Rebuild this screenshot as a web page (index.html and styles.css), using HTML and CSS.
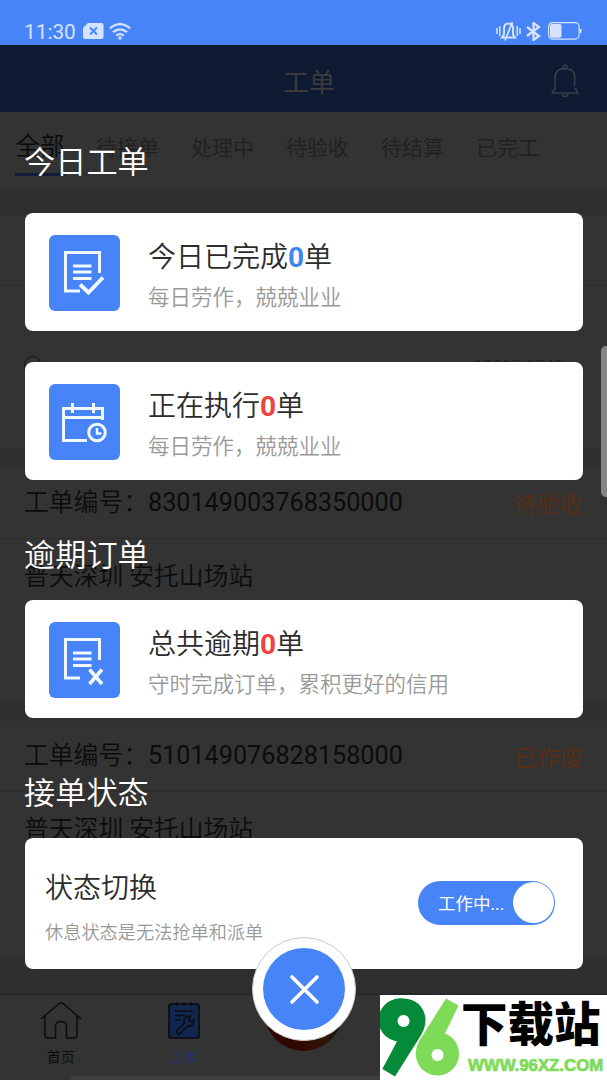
FILE: index.html
```html
<!DOCTYPE html>
<html lang="zh-CN">
<head>
    <meta charset="UTF-8">
    <title>工单</title>
    <link rel="stylesheet" href="styles.css">
</head>
<body>
    <div class="phone">
        <div class="status-bar">
            <span class="time">11:30</span>
            <svg class="sim" width="21" height="16" viewBox="0 0 21 16"><path d="M5 0h13.500q2 0 2 2v12q0 2-2 2h-16.500q-2 0-2-2V5z" fill="#d5e3fe"/><path d="M7 4.500l7 7M14 4.500l-7 7" stroke="#4684f8" stroke-width="1.800"/></svg>
            <svg class="wifi" width="22" height="17" viewBox="0 0 22 17"><g fill="none" stroke="#d5e3fe" stroke-width="2.200"><path d="M.8 5.500q10.200-8.600 20.400 0"/><path d="M4 9.200q7-5.800 14 0"/><path d="M7.200 12.600q3.800-3 7.600 0"/></g><circle cx="11" cy="15" r="1.800" fill="#d5e3fe"/></svg>
            <span class="spacer"></span>
            <svg class="mute" width="25" height="20" viewBox="0 0 25 20"><g fill="none" stroke="#d5e3fe" stroke-width="1.500"><path d="M1 7v6M3.800 5v10M21.200 5v10M24 7v6"/><path d="M6 16.500h13l-2-3V7.500q0-5-4.500-5T8 7.500v6z" stroke-width="2"/><path d="M16.500 1L9 19.500" stroke-width="1.800"/></g></svg>
            <svg class="bluetooth" width="15" height="19" viewBox="0 0 15 19"><path d="M1 5l12 9-5.500 4V1L13 5 1 14" fill="none" stroke="#d5e3fe" stroke-width="2.300"/></svg>
            <svg class="battery" width="34" height="18" viewBox="0 0 34 18"><rect x=".6" y=".6" width="30.500" height="16.500" rx="4" fill="none" stroke="#d5e3fe" stroke-width="1.200"/><rect x="2" y="2" width="11.500" height="13.700" rx="2" fill="#d5e3fe"/><path d="M32.500 7v4" stroke="#d5e3fe" stroke-width="2"/></svg>
        </div>

        <div class="header">
            <span></span>
            <h1>工单</h1>
            <svg class="bell" width="28" height="34" viewBox="0 0 28 34"><g fill="none" stroke="#3a3f4a" stroke-width="1.400"><circle cx="14" cy="3" r="2"/><path d="M4 26.500V14.500q0-10 10-10t10 10c0 3 0 5-.8 7.500M24 23.500l2.800 5.500H1l3-5"/><path d="M11 29.500q0 3 3 3t3-3"/></g></svg>
        </div>

        <div class="tabs">
            <div class="tab active">全部</div>
            <div class="tab">待接单</div>
            <div class="tab">处理中</div>
            <div class="tab">待验收</div>
            <div class="tab">待结算</div>
            <div class="tab">已完工</div>
        </div>

        <div class="orders">
            <div class="order">
                <div class="order-head"></div>
                <div class="order-body">
                    <div class="order-meta"><span class="dot"></span><span class="meta-no">18317 0740</span></div>
                </div>
            </div>
            <div class="order">
                <div class="order-head"><span>工单编号：<span class="order-no">830149003768350000</span></span><span class="order-state">待验收</span></div>
                <div class="order-body">普天深圳 安托山场站</div>
            </div>
            <div class="order">
                <div class="order-head"><span>工单编号：<span class="order-no">510149076828158000</span></span><span class="order-state">已作废</span></div>
                <div class="order-body">普天深圳 安托山场站</div>
            </div>
        </div>

        <div class="nav">
            <div class="nav-item">
                <svg width="42" height="38" viewBox="0 0 42 38"><path d="M1 18L19 2.500q2-1.500 4 0L41 18M5 15v19q0 3 3 3h7.500V25.500q0-5 5.500-5t5.500 5V37H34q3 0 3-3V15" fill="none" stroke="#0c0c0c" stroke-width="1.500"/></svg>
                <span>首页</span>
            </div>
            <div class="nav-item current">
                <svg width="32" height="38" viewBox="0 0 32 38"><rect x="1" y="3" width="30" height="34" rx="2.500" fill="#10264c" stroke="#080b10" stroke-width="1.600"/><path d="M9 1v4M16 1v4M23 1v4M7 10h18M7 14.500h10M7 19h6" stroke="#080b10" stroke-width="1.300"/><path d="M8.500 30l8-8q-1.500-5.500 3.500-6.500l2.500-.3-2 3.500 2 2 3.500-2q0 6.500-6.500 6.500l-8 8q-2 .5-3-3.200z" fill="none" stroke="#080b10" stroke-width="1.400"/></svg>
                <span>工单</span>
            </div>
            <div class="nav-item nav-center"><i></i></div>
            <div class="nav-item"></div>
            <div class="nav-item"></div>
        </div>
        <div class="bottom-strip"></div>

        <div class="overlay">
            <h2>今日工单</h2>
            <div class="card">
                <svg class="tile" width="71" height="76" viewBox="0 0 71 76"><g fill="none" stroke="#f2f8ff" stroke-width="3"><path d="M50.500 38V17.500h-34V56H31M24 31h18.500M24 37h18.500M24 43.500h18.500"/><path d="M31 49.500l8.500 8L54 42.500" stroke-width="3.800"/></g></svg>
                <div class="card-text">
                    <h3>今日已完成<b class="blue">0</b>单</h3>
                    <p>每日劳作，兢兢业业</p>
                </div>
            </div>
            <div class="card">
                <svg class="tile" width="71" height="76" viewBox="0 0 71 76"><g fill="none" stroke="#f2f8ff" stroke-width="3"><path d="M38 56.500H14.500v-32h39V36M14.500 33.500h39M23.500 19v10M44.500 19v10"/><circle cx="48" cy="48.500" r="8.300"/><path d="M48 44v5.500h4.500" stroke-width="2.400"/></g></svg>
                <div class="card-text">
                    <h3>正在执行<b class="red">0</b>单</h3>
                    <p>每日劳作，兢兢业业</p>
                </div>
            </div>

            <h2>逾期订单</h2>
            <div class="card">
                <svg class="tile" width="71" height="76" viewBox="0 0 71 76"><g fill="none" stroke="#f2f8ff" stroke-width="3"><path d="M50.500 38V17.500h-34V56H31M24 31h18.500M24 37h18.500M24 43.500h18.500"/><path d="M40.500 47.500L53 62M53 47.500L40.500 62" stroke-width="3.600"/></g></svg>
                <div class="card-text">
                    <h3>总共逾期<b class="red">0</b>单</h3>
                    <p>守时完成订单，累积更好的信用</p>
                </div>
            </div>

            <h2>接单状态</h2>
            <div class="card switch-card">
                <div class="switch-text">
                    <h3>状态切换</h3>
                    <p>休息状态是无法抢单和派单</p>
                </div>
                <div class="switch"><span>工作中...</span><i class="knob"></i></div>
            </div>
        </div>

        <div class="close-btn">
            <svg width="82" height="82" viewBox="0 0 82 82"><circle cx="41" cy="41" r="41" fill="#4684f8"/><path d="M29 29l25 25M54 29L29 54" stroke="#fff" stroke-width="3.600" stroke-linecap="round"/></svg>
        </div>

        <div class="scroll-thumb"></div>

        <div class="watermark">
            <svg width="80" height="85" viewBox="0 0 80 85">
                <path fill="#058a3a" fill-rule="evenodd" d="M23.500 3.500C36 3.500 45.500 13 45.500 25q0 8-5 16L15 81.500 2.300 74 17 46.500A21.500 21.500 0 0 1 23.500 3.500zM23.500 20a6 6 0 1 0 .1 0z"/>
                <path fill="#7ddb57" fill-rule="evenodd" d="M66 3.500L78.500 10.500 65 38.500A21.700 21.700 0 1 1 36.500 53q.5-3 3-7.500zM57.500 54a6 6 0 1 0 .1 0z"/>
            </svg>
            <div class="mark-text">
                <strong>下载站</strong>
                <span>WWW.96XZ.COM</span>
            </div>
        </div>
    </div>
</body>
</html>
```
FILE: styles.css
```css
* {
    box-sizing: border-box;
}
body {
    margin: 0;
    background: #333;
    font-family: Roboto, "Noto Sans CJK SC", sans-serif;
    color: #2c2c2c;
}
h1, h2, h3, p {
    margin: 0;
    font-weight: 350;
}
svg {
    display: block;
    flex: none;
}
.phone {
    position: relative;
    width: 607px;
    height: 1080px;
    overflow: hidden;
    display: flex;
    flex-direction: column;
}

/* top */
.status-bar {
    height: 45px;
    flex: none;
    padding: 17px 25px 0 24px;
    display: flex;
    align-items: center;
    background: #4684f8;
    color: #d5e3fe;
}
.time {
    width: 59px;
    font-size: 20.8px;
    line-height: 28px;
    padding-top: 1px;
}
.wifi {
    margin-left: 5px;
}
.spacer {
    flex: 1;
}
.bluetooth {
    margin: 0 7px 0 5px;
}
.header {
    height: 67px;
    flex: none;
    padding: 4px 28px 0;
    display: grid;
    grid-template-columns: 28px 1fr 28px;
    align-items: center;
    background: #0d1a31;
}
.header h1 {
    font-size: 26px;
    font-weight: 400;
    text-align: center;
    padding-left: 11px;
    color: #3b3b3f;
}
.tabs {
    height: 78px;
    flex: none;
    padding-left: 15px;
    display: flex;
    color: #202020;
    font-size: 21px;
    font-weight: 350;
    line-height: 72px;
}
.tab {
    width: 95px;
    text-align: center;
}
.tab.active {
    width: 50px;
    height: 64px;
    margin-right: 15px;
    border-bottom: 3px solid #101c38;
    font-size: 24.5px;
    line-height: 70px;
    color: #0a0a0a;
}

/* order list */
.orders {
    height: 803px;
    flex: none;
    padding-top: 25px;
    background: #2f2f2f;
    font-size: 24.8px;
    font-weight: 350;
    color: #0c0c0c;
}
.order {
    height: 234px;
    margin-bottom: 19px;
    background: #333;
}
.order-head {
    height: 71px;
    padding: 0 24px;
    border-bottom: 1px solid #2d2d2d;
    display: flex;
    justify-content: space-between;
    line-height: 70px;
}
.order-no {
    font-size: 25.2px;
    font-weight: 400;
}
.order-state {
    font-size: 23px;
    line-height: 75px;
    color: #5a2e13;
}
.order-body {
    padding: 0 24px;
    line-height: 75px;
}
.order-meta {
    padding: 70px 20px 0 0;
    display: flex;
    justify-content: space-between;
    font-size: 17px;
    line-height: 20px;
}
.dot {
    width: 17px;
    height: 17px;
    border: 1px solid #151515;
    border-radius: 50%;
}
.meta-no {
    color: #1c1c1c;
}

/* bottom nav */
.nav {
    flex: 1;
    border-top: 2px solid #292929;
    display: grid;
    grid-template-columns: repeat(5, 1fr);
    font-size: 14px;
    line-height: 20px;
    color: #0c0c0c;
    background: #333;
}
.nav-item {
    display: flex;
    flex-direction: column;
    align-items: center;
    gap: 8px;
    padding-top: 6px;
}
.current {
    padding-left: 4px;
    color: #25336a;
}
.nav-center i {
    width: 79px;
    height: 79px;
    margin-top: -29px;
    border-radius: 50%;
    background: linear-gradient(90deg, #300800 50%, #301808 80%, #111);
}
.bottom-strip {
    height: 4px;
    flex: none;
    margin-left: 71px;
    background: #3f3f3f;
}

/* popup */
.overlay {
    position: absolute;
    top: 45px;
    left: 0;
    width: 607px;
    padding: 93px 24px 0 25px;
}
.overlay h2 {
    height: 75px;
    margin-left: -1px;
    font-size: 31.2px;
    line-height: 50px;
    color: #fff;
}
.card {
    height: 118px;
    margin-bottom: 31px;
    padding: 0 24px;
    display: flex;
    align-items: center;
    background: #fff;
    border-radius: 8px;
}
.card + h2 {
    margin-top: 51px;
    height: 69px;
}
.card h3 {
    font-size: 28px;
    line-height: 40px;
}
.card p {
    font-size: 21.5px;
    line-height: 32px;
    color: #999;
}
.card b {
    font-weight: 700;
}
.tile {
    margin: 2px 28px 0 0;
    background: #4684f8;
    border-radius: 6px;
}
.card-text {
    display: flex;
    flex-direction: column;
    gap: 4px;
    padding-top: 7px;
}
.card .blue {
    color: #4285ee;
}
.card .red {
    color: #ee4340;
}
.switch-card {
    height: 131px;
    padding: 0 28px 0 20px;
    justify-content: space-between;
}
.switch-text {
    display: flex;
    flex-direction: column;
    gap: 8px;
    padding-top: 10px;
}
.switch-card p {
    font-size: 18.2px;
}
.switch {
    width: 137px;
    height: 44px;
    margin-bottom: 2px;
    padding: 0 1px 0 20px;
    display: flex;
    align-items: center;
    justify-content: space-between;
    background: #4684f8;
    border-radius: 22px;
    color: #fff;
    font-size: 17.5px;
}
.knob {
    width: 41px;
    height: 41px;
    border-radius: 50%;
    background: #fff;
}
.close-btn {
    position: absolute;
    left: 252px;
    top: 937px;
    width: 104px;
    height: 104px;
    display: flex;
    align-items: center;
    justify-content: center;
    border: 1px solid #c8c8c4;
    border-radius: 50%;
    background: #fff;
}
.scroll-thumb {
    position: absolute;
    right: -4px;
    top: 346px;
    width: 10px;
    height: 151px;
    border-radius: 5px;
    background: #858585;
}

.watermark {
    position: absolute;
    right: 0;
    bottom: 0;
    width: 227px;
    height: 85px;
    display: flex;
    background: #fff;
    overflow: hidden;
}
.mark-text {
    margin-left: 1px;
    display: flex;
    flex-direction: column;
    white-space: nowrap;
}
.mark-text strong {
    height: 60px;
    font-size: 46.5px;
    line-height: 60px;
    font-weight: 900;
    color: #000;
}
.mark-text span {
    padding-left: 7px;
    font-family: "Liberation Sans", sans-serif;
    font-size: 16.8px;
    line-height: 22px;
    font-weight: 700;
    color: #7ddb57;
    -webkit-text-stroke: .7px #7ddb57;
}
```
